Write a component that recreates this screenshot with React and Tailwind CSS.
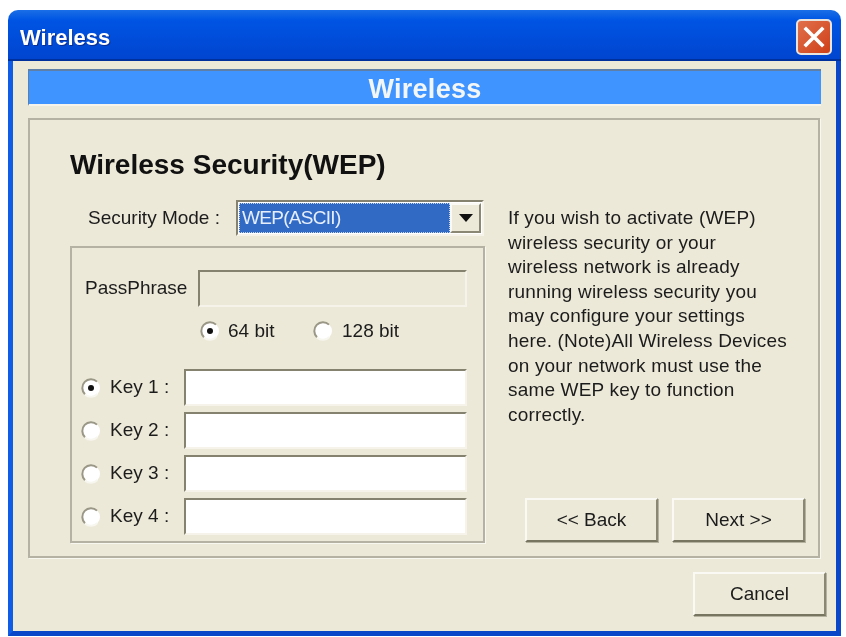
const sunken = "border-2 border-t-[#85826f] border-l-[#85826f] border-r-[#f5f3ea] border-b-[#f5f3ea]";

function Radio({ checked }) {
  return (
    <svg width="20" height="20" viewBox="0 0 20 20" className="shrink-0">
      <circle cx="10" cy="10" r="9" fill="#ffffff" />
      <path d="M16 3.6 A8.6 8.6 0 0 0 4 16.2" fill="none" stroke="#9a9787" strokeWidth="2" />
      <path d="M4 16.6 A8.8 8.8 0 0 0 16.4 16" fill="none" stroke="#f7f6ef" strokeWidth="2" />
      {checked && <circle cx="10" cy="10" r="3" fill="#111111" />}
    </svg>
  );
}

function TextBox({ className, disabled }) {
  return (
    <input
      readOnly
      disabled={disabled}
      className={`${sunken} ${disabled ? "bg-[#ece9d8]" : "bg-white"} block outline-none ${className}`}
    />
  );
}

function Btn({ label, className }) {
  return (
    <button
      type="button"
      className={`h-[44px] w-[133px] bg-[#ece9d8] text-[19px] text-[#1c1c1c] border-2 border-t-[#faf9f3] border-l-[#faf9f3] border-r-[#8a8775] border-b-[#77745f] shadow-[1px_1px_0_#b5b2a0] ${className || ""}`}
    >
      {label}
    </button>
  );
}

function KeyRow({ n, checked, className }) {
  return (
    <div className={`flex items-center pl-[3px] ${className || ""}`}>
      <Radio checked={checked} />
      <span className="ml-[9px] w-[74px] whitespace-nowrap text-[19px] text-[#1c1c1c]">Key {n} :</span>
      <TextBox className="h-[37px] w-[283px]" />
    </div>
  );
}

export default function App() {
  return (
    <div className="h-[637px] w-[846px] bg-white pl-[8px] pt-[10px] font-['Liberation_Sans',Arial,sans-serif] blur-[0.5px]">
      <div className="flex h-[626px] w-[833px] flex-col">
        {/* title bar */}
        <div className="flex h-[51px] shrink-0 items-center justify-between rounded-t-[10px] bg-gradient-to-b from-[#1a6ee6] via-[#0054e3] via-[20%] to-[#0044cf] pt-[2px] pl-[12px] pr-[9px] shadow-[inset_0_-2px_0_#00309c]">
          <span className="mt-[2px] text-[22px] font-bold text-white [text-shadow:1px_1px_0_#0a2f8f]">Wireless</span>
          <div className="flex h-[36px] w-[36px] items-center justify-center rounded-[5px] border-2 border-[#e8e4e0] bg-gradient-to-br from-[#e0704a] to-[#cf3e14]">
            <svg width="24" height="24" viewBox="0 0 24 24">
              <path d="M4 4 L20 20 M20 4 L4 20" stroke="#ffffff" strokeWidth="3.6" strokeLinecap="square" />
            </svg>
          </div>
        </div>

        {/* dialog body */}
        <div className="flex min-h-0 flex-1 flex-col border-x-[5px] border-b-[5px] border-l-[#0f5ce6] border-r-[#0a47c8] border-b-[#0a47c8] bg-[#ece9d8] px-[15px] pt-[8px]">
          <div className="flex h-[37px] w-[793px] shrink-0 items-center justify-center border-t-2 border-l border-t-[#5d7fa8] border-l-[#5d7fa8] border-b-2 border-b-[#f5f3ea] bg-[#3f94ff] pt-[3px] text-[27px] font-bold tracking-[0.3px] text-[#f3f6f6]">
            Wireless
          </div>

          <div className="mt-[12px] flex h-[440px] w-[792px] shrink-0 border-2 border-[#b5b2a3] pl-[40px] shadow-[1px_1px_0_#f8f7f0]">
            <div className="w-[415px] shrink-0">
              <h1 className="mt-[26px] h-[38px] whitespace-nowrap text-[28px] leading-[38px] font-bold text-[#111111]">
                Wireless Security(WEP)
              </h1>
              <div className="mt-[16px] flex h-[36px] items-center">
                <span className="ml-[18px] w-[148px] whitespace-nowrap text-[19px] text-[#1c1c1c]">Security Mode :</span>
                <div className={`${sunken} flex h-[36px] w-[248px] items-center bg-white p-[1px]`}>
                  <div className="flex h-full flex-1 items-center border border-dotted border-[#c9d6ee] bg-[#316ac5] pl-[2px] text-[19px] tracking-[-0.7px] text-[#e6eefb]">
                    WEP(ASCII)
                  </div>
                  <div className="flex h-full w-[31px] items-center justify-center border-2 border-t-[#faf9f3] border-l-[#faf9f3] border-r-[#8a8775] border-b-[#8a8775] bg-[#ece9d8]">
                    <svg width="14" height="8" viewBox="0 0 14 8">
                      <path d="M0 0 H14 L7 8 Z" fill="#111111" />
                    </svg>
                  </div>
                </div>
              </div>

              <div className="mt-[10px] h-[297px] w-[415px] border-2 border-[#b5b2a3] px-[6px] pt-[22px] shadow-[1px_1px_0_#f8f7f0]">
                <div className="flex items-center">
                  <span className="ml-[7px] w-[113px] whitespace-nowrap text-[19px] text-[#1c1c1c]">PassPhrase</span>
                  <TextBox disabled className="h-[37px] w-[269px]" />
                </div>
                <div className="mt-[14px] flex h-[20px] items-center pl-[122px]">
                  <Radio checked />
                  <span className="ml-[8px] w-[46px] whitespace-nowrap text-[19px] text-[#1c1c1c]">64 bit</span>
                  <span className="w-[39px]" />
                  <Radio />
                  <span className="ml-[9px] whitespace-nowrap text-[19px] text-[#1c1c1c]">128 bit</span>
                </div>
                <KeyRow n={1} checked className="mt-[28px]" />
                <KeyRow n={2} className="mt-[6px]" />
                <KeyRow n={3} className="mt-[6px]" />
                <KeyRow n={4} className="mt-[6px]" />
              </div>
            </div>

            <div className="ml-[23px] flex flex-1 flex-col">
              <p className="mt-[86px] w-[285px] whitespace-nowrap text-[19px] leading-[24.6px] tracking-[0.17px] text-[#1c1c1c]">
                If you wish to activate (WEP)
                <br />
                wireless security or your
                <br />
                wireless network is already
                <br />
                running wireless security you
                <br />
                may configure your settings
                <br />
                here. (Note)All Wireless Devices
                <br />
                on your network must use the
                <br />
                same WEP key to function
                <br />
                correctly.
              </p>
              <div className="mt-auto mb-[14px] ml-[17px] flex gap-[14px]">
                <Btn label="<< Back" />
                <Btn label="Next >>" />
              </div>
            </div>
          </div>

          <div className="mt-[14px] flex w-[798px] justify-end">
            <Btn label="Cancel" />
          </div>
        </div>
      </div>
    </div>
  );
}
